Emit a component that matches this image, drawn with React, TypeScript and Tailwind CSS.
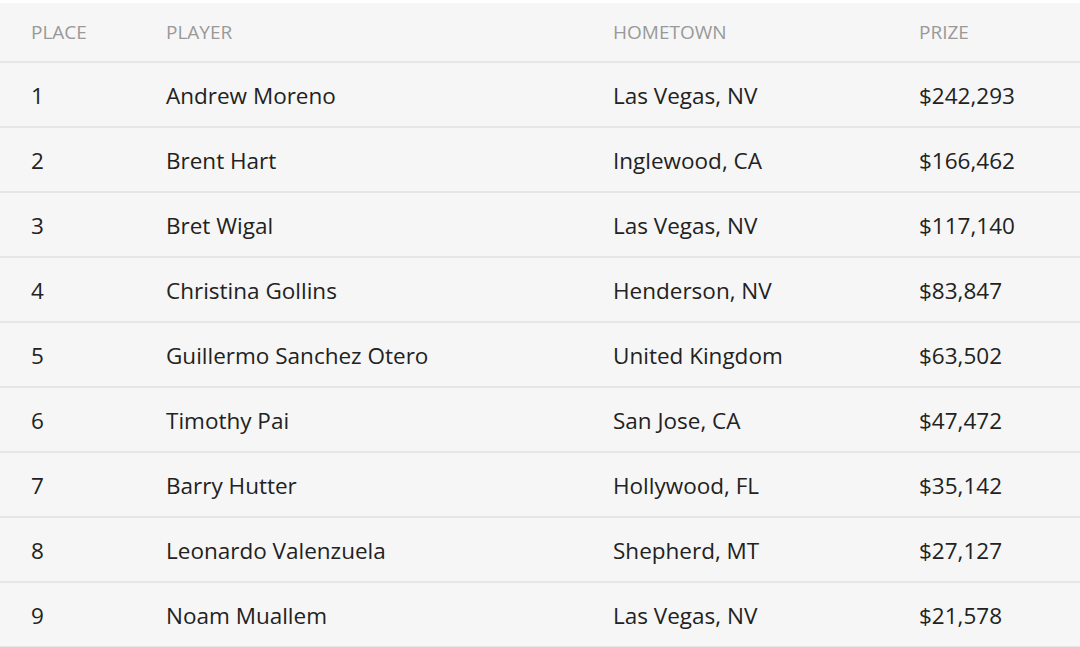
const rows = [
  ["1", "Andrew Moreno", "Las Vegas, NV", "$242,293"],
  ["2", "Brent Hart", "Inglewood, CA", "$166,462"],
  ["3", "Bret Wigal", "Las Vegas, NV", "$117,140"],
  ["4", "Christina Gollins", "Henderson, NV", "$83,847"],
  ["5", "Guillermo Sanchez Otero", "United Kingdom", "$63,502"],
  ["6", "Timothy Pai", "San Jose, CA", "$47,472"],
  ["7", "Barry Hutter", "Hollywood, FL", "$35,142"],
  ["8", "Leonardo Valenzuela", "Shepherd, MT", "$27,127"],
  ["9", "Noam Muallem", "Las Vegas, NV", "$21,578"],
]

const cols = "grid grid-cols-[135px_447px_306px_1fr] pl-[31px] items-center"

export default function App() {
  return (
    <div className="w-[1080px] h-[647px] overflow-hidden bg-white pt-[3px] font-['Open_Sans',sans-serif]">
      <div className="bg-[#f6f6f6] h-full">
        <div className={`${cols} h-[60px] text-[19px] uppercase text-[#999] border-b-2 border-[#e6e6e6]`}>
          <div>Place</div>
          <div>Player</div>
          <div>Hometown</div>
          <div>Prize</div>
        </div>
        {rows.map((r) => (
          <div key={r[0]} className={`${cols} h-[65px] pt-[2px] text-[22.5px] text-[#222] border-b-2 border-[#e6e6e6]`}>
            {r.map((c, i) => (
              <div key={i}>{c}</div>
            ))}
          </div>
        ))}
      </div>
    </div>
  )
}
